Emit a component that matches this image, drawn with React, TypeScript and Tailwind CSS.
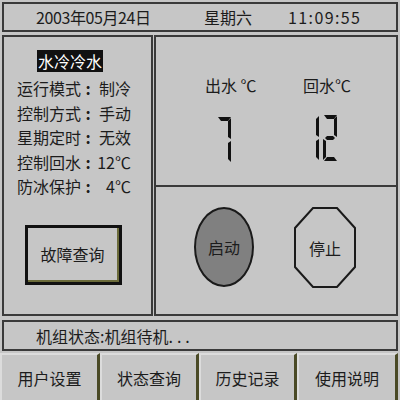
import React from "react";

const font = { fontFamily: '"Noto Sans CJK SC", "DejaVu Sans", sans-serif' };

// seven segment map: a b c d e f g
const SEGS: Record<string, string> = {
  "1": "0110000",
  "2": "1101101",
  "7": "1110000",
};

function Digit({ d, narrow }: { d: string; narrow?: boolean }) {
  const on = SEGS[d] ?? "0000000";
  const polys = [
    "1,0 14,0 11,4 4,4", // a
    "14,1 14,22 11,20 11,4", // b
    "14,24 14,45 11,42 11,26", // c
    "4,42 11,42 14,46 1,46", // d
    "0,24 3,26 3,42 0,45", // e
    "0,1 3,4 3,20 0,22", // f
    "2,23 4,21 10,21 12,23 10,25 4,25", // g
  ];
  return (
    <svg
      viewBox={narrow ? "10 0 4 46" : "0 0 14 46"}
      className={narrow ? "h-[46px] w-[4px]" : "h-[46px] w-[14px]"}
    >
      {polys.map((p, i) =>
        on[i] === "1" ? <polygon key={i} points={p} fill="#111" /> : null,
      )}
    </svg>
  );
}

function Row({ label, value }: { label: string; value: string }) {
  return (
    <div className="flex h-[24.5px] items-center">
      <span className="w-[64px]">{label}</span>
      <span className="w-[14px] text-center font-bold">:</span>
      <span className="w-[36px] text-right">{value}</span>
    </div>
  );
}

function MenuButton({ label, w }: { label: string; w: string }) {
  return (
    <div
      className={`${w} flex items-center justify-center border-t-2 border-l-2 border-r-[3px] border-t-[#dcdcdc] border-l-[#dcdcdc] border-r-[#4a4a26] text-[16px] text-[#1c1c1c]`}
    >
      {label}
    </div>
  );
}

export default function App() {
  return (
    <div
      className="h-[400px] w-[400px] overflow-hidden bg-[#c6c6c6] pt-[2px] text-[#1c1c1c]"
      style={font}
    >
      {/* top bar */}
      <div className="mx-[2px] flex h-[30px] items-center border-2 border-[#3a3a3a] text-[16px] leading-none">
        <span className="ml-[32px] w-[168px] tracking-[-0.4px]">2003年05月24日</span>
        <span className="w-[84px]">星期六</span>
        <span className="tracking-[1.4px]">11:09:55</span>
      </div>

      {/* middle */}
      <div className="mx-[2px] mt-[3px] flex h-[281px] gap-[1px]">
        <div className="flex w-[151px] flex-col border-2 border-[#3a3a3a] pt-[13px] pl-[13px] text-[16px] leading-none">
          <div className="ml-[20px] mb-[4px] w-fit bg-[#111] px-[1px] py-[3px] text-white">
            水冷冷水
          </div>
          <Row label="运行模式" value="制冷" />
          <Row label="控制方式" value="手动" />
          <Row label="星期定时" value="无效" />
          <Row label="控制回水" value="12℃" />
          <Row label="防冰保护" value="4℃" />
          <div className="mt-[26px] ml-[8px] flex h-[60px] w-[97px] items-center justify-center border-[3px] border-[#111]">
            <div className="flex h-full w-full items-center justify-center border-r-2 border-b-2 border-[#6b6b3a]">
              故障查询
            </div>
          </div>
        </div>

        <div className="flex flex-1 flex-col border-2 border-[#3a3a3a]">
          <div className="flex h-[150px] border-b-2 border-[#3a3a3a] pt-[40px] text-[16px] leading-none">
            <div className="ml-[49px] flex w-[98px] flex-col">
              <span>出水 ℃</span>
              <div className="mt-[24px] ml-[12px] flex">
                <Digit d="7" />
              </div>
            </div>
            <div className="flex flex-col">
              <span>回水℃</span>
              <div className="mt-[22px] ml-[12px] flex gap-[4px]">
                <Digit d="1" narrow />
                <Digit d="2" />
              </div>
            </div>
          </div>
          <div className="flex flex-1 items-start pt-[20px] text-[16px]">
            <div className="ml-[38px] flex h-[80px] w-[60px] items-center justify-center rounded-[50%] border-2 border-[#1a1a1a] bg-[#808080]">
              启动
            </div>
            <div className="relative ml-[40px] flex h-[81px] w-[62px] items-center justify-center">
              <svg viewBox="0 0 62 81" className="absolute inset-0 h-full w-full">
                <polygon
                  points="19,1 43,1 61,21 61,60 43,80 19,80 1,60 1,21"
                  fill="none"
                  stroke="#1a1a1a"
                  strokeWidth="2"
                />
              </svg>
              <span className="relative">停止</span>
            </div>
          </div>
        </div>
      </div>

      {/* status */}
      <div className="mx-[2px] mt-[4px] flex h-[31px] items-center border-2 border-[#3a3a3a] pl-[32px] text-[16px] leading-none">
        机组状态:机组待机<span className="tracking-[4px]">...</span>
      </div>

      {/* menu */}
      <div className="mt-[2px] flex h-[48px]">
        <MenuButton label="用户设置" w="w-[100px]" />
        <MenuButton label="状态查询" w="w-[99px]" />
        <MenuButton label="历史记录" w="w-[98px]" />
        <MenuButton label="使用说明" w="w-[101px]" />
      </div>
    </div>
  );
}
